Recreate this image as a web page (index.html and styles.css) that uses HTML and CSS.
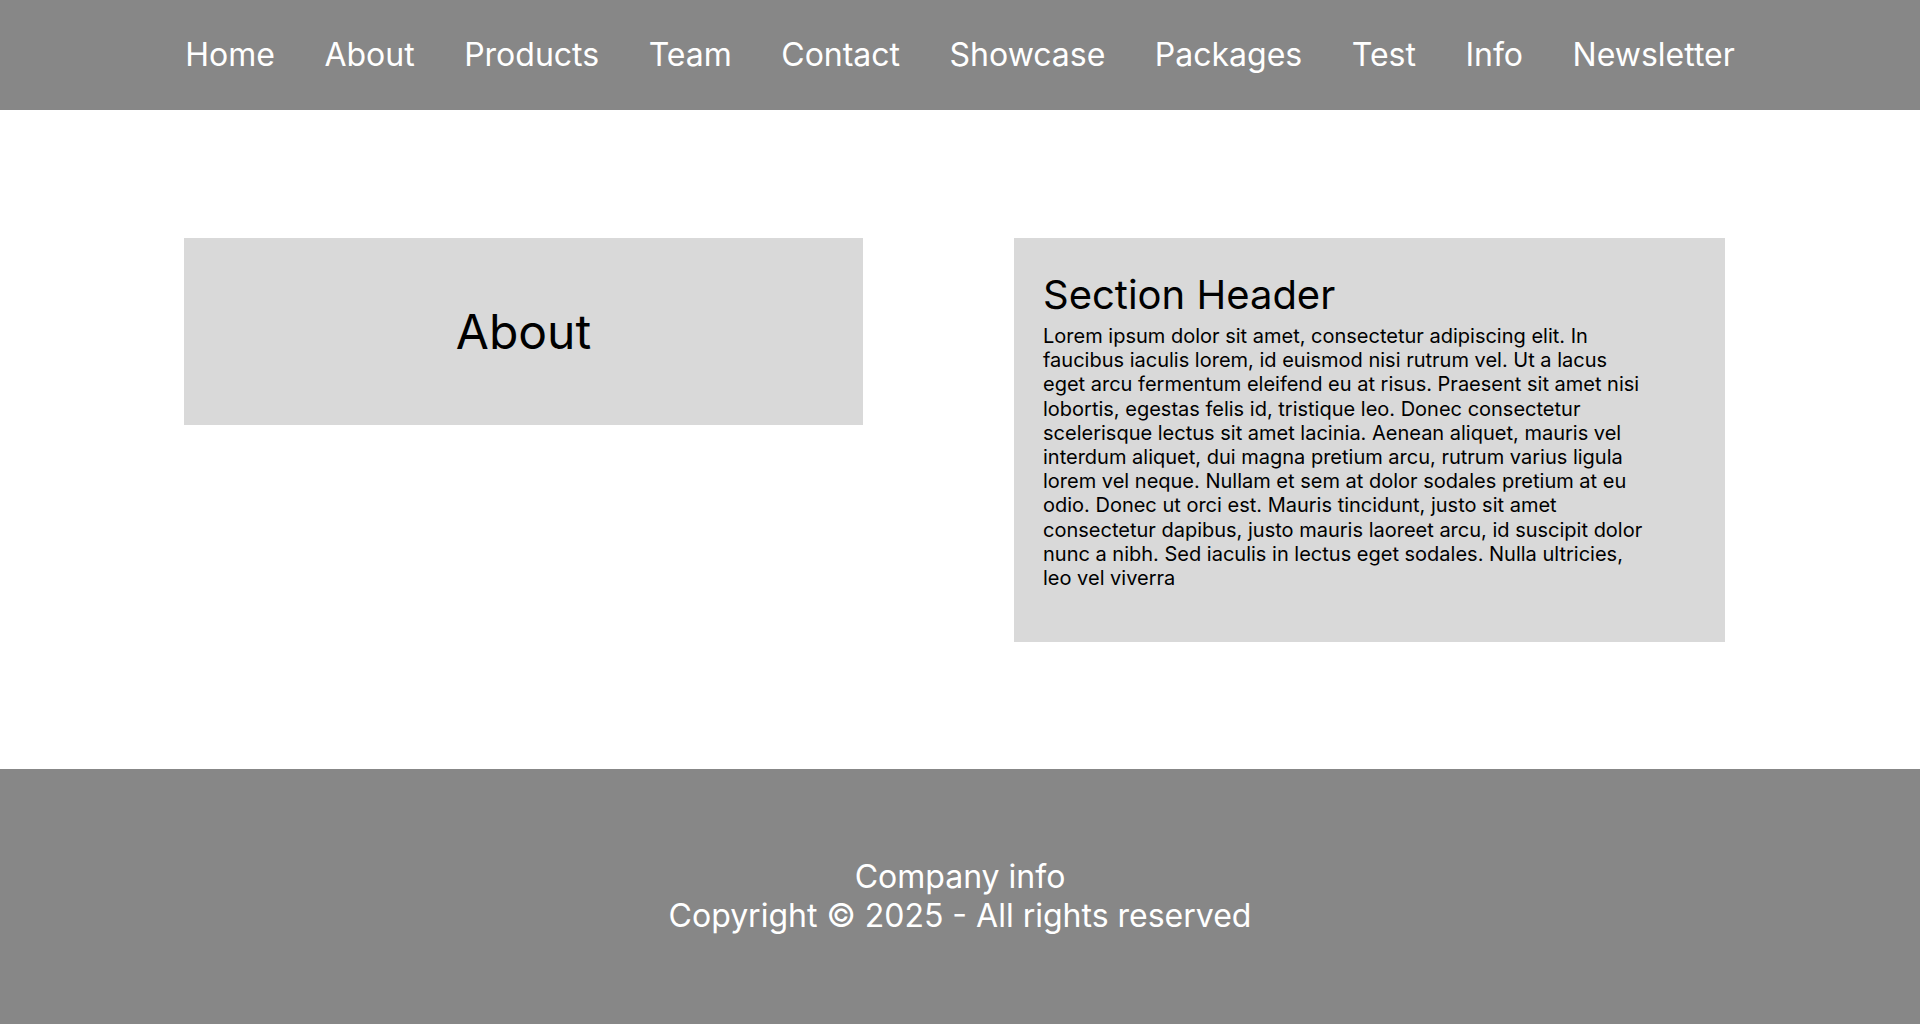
FILE: index.html
```html
<!DOCTYPE html>
<html lang="en">
<head>
<meta charset="utf-8">
<title>About</title>
<link rel="stylesheet" href="styles.css">
</head>
<body>
<header class="topbar">
  <nav class="nav">
    <a class="nav-link" href="#">Home</a>
    <a class="nav-link" href="#">About</a>
    <a class="nav-link" href="#">Products</a>
    <a class="nav-link" href="#">Team</a>
    <a class="nav-link" href="#">Contact</a>
    <a class="nav-link" href="#">Showcase</a>
    <a class="nav-link" href="#">Packages</a>
    <a class="nav-link" href="#">Test</a>
    <a class="nav-link" href="#">Info</a>
    <a class="nav-link" href="#">Newsletter</a>
  </nav>
</header>
<main class="content">
  <div class="title-box">
    <h1 class="page-title">About</h1>
  </div>
  <section class="text-box">
    <h2 class="section-title">Section Header</h2>
    <p class="section-text">Lorem ipsum dolor sit amet, consectetur adipiscing elit. In faucibus iaculis lorem, id euismod nisi rutrum vel. Ut a lacus eget arcu fermentum eleifend eu at risus. Praesent sit amet nisi lobortis, egestas felis id, tristique leo. Donec consectetur scelerisque lectus sit amet lacinia. Aenean aliquet, mauris vel interdum aliquet, dui magna pretium arcu, rutrum varius ligula lorem vel neque. Nullam et sem at dolor sodales pretium at eu odio. Donec ut orci est. Mauris tincidunt, justo sit amet consectetur dapibus, justo mauris laoreet arcu, id suscipit dolor nunc a nibh. Sed iaculis in lectus eget sodales. Nulla ultricies, leo vel viverra</p>
  </section>
</main>
<footer class="footer">
  <p class="footer-line">Company info</p>
  <p class="footer-line">Copyright © 2025 - All rights reserved</p>
</footer>
</body>
</html>
```

FILE: styles.css
```css
* { box-sizing: border-box; }
html, body { margin: 0; padding: 0; }
body {
  font-family: Inter, "Noto Sans", sans-serif;
  background: #ffffff;
  color: #000000;
  width: 1920px;
  height: 1024px;
  display: flex;
  flex-direction: column;
}
.topbar {
  height: 110px;
  flex: none;
  background: #878787;
  display: flex;
  align-items: center;
  justify-content: center;
}
.nav {
  display: flex;
  gap: 49.5px;
  align-items: center;
}
.nav-link {
  color: #ffffff;
  text-decoration: none;
  font-size: 32px;
  line-height: 1;
}
.content {
  height: 659px;
  flex: none;
  display: flex;
  align-items: flex-start;
  padding: 128px 0 0 184px;
  gap: 151px;
}
.title-box {
  width: 679px;
  height: 187px;
  background: #d9d9d9;
  display: flex;
  align-items: center;
  justify-content: center;
}
.page-title {
  margin: 0;
  font-size: 48px;
  font-weight: 400;
}
.text-box {
  width: 711px;
  height: 404px;
  background: #d9d9d9;
  padding: 33px 29px 0 29px;
}
.section-title {
  margin: 0;
  font-size: 40px;
  font-weight: 400;
  line-height: 48.4px;
}
.section-text {
  margin: 4.5px 0 0 0;
  width: 605px;
  font-size: 20px;
  line-height: 24.2px;
}
.footer {
  flex: 1;
  background: #878787;
  color: #ffffff;
  display: flex;
  flex-direction: column;
  align-items: center;
  justify-content: center;
}
.footer-line {
  margin: 0;
  font-size: 32px;
  line-height: 38.5px;
}
```
